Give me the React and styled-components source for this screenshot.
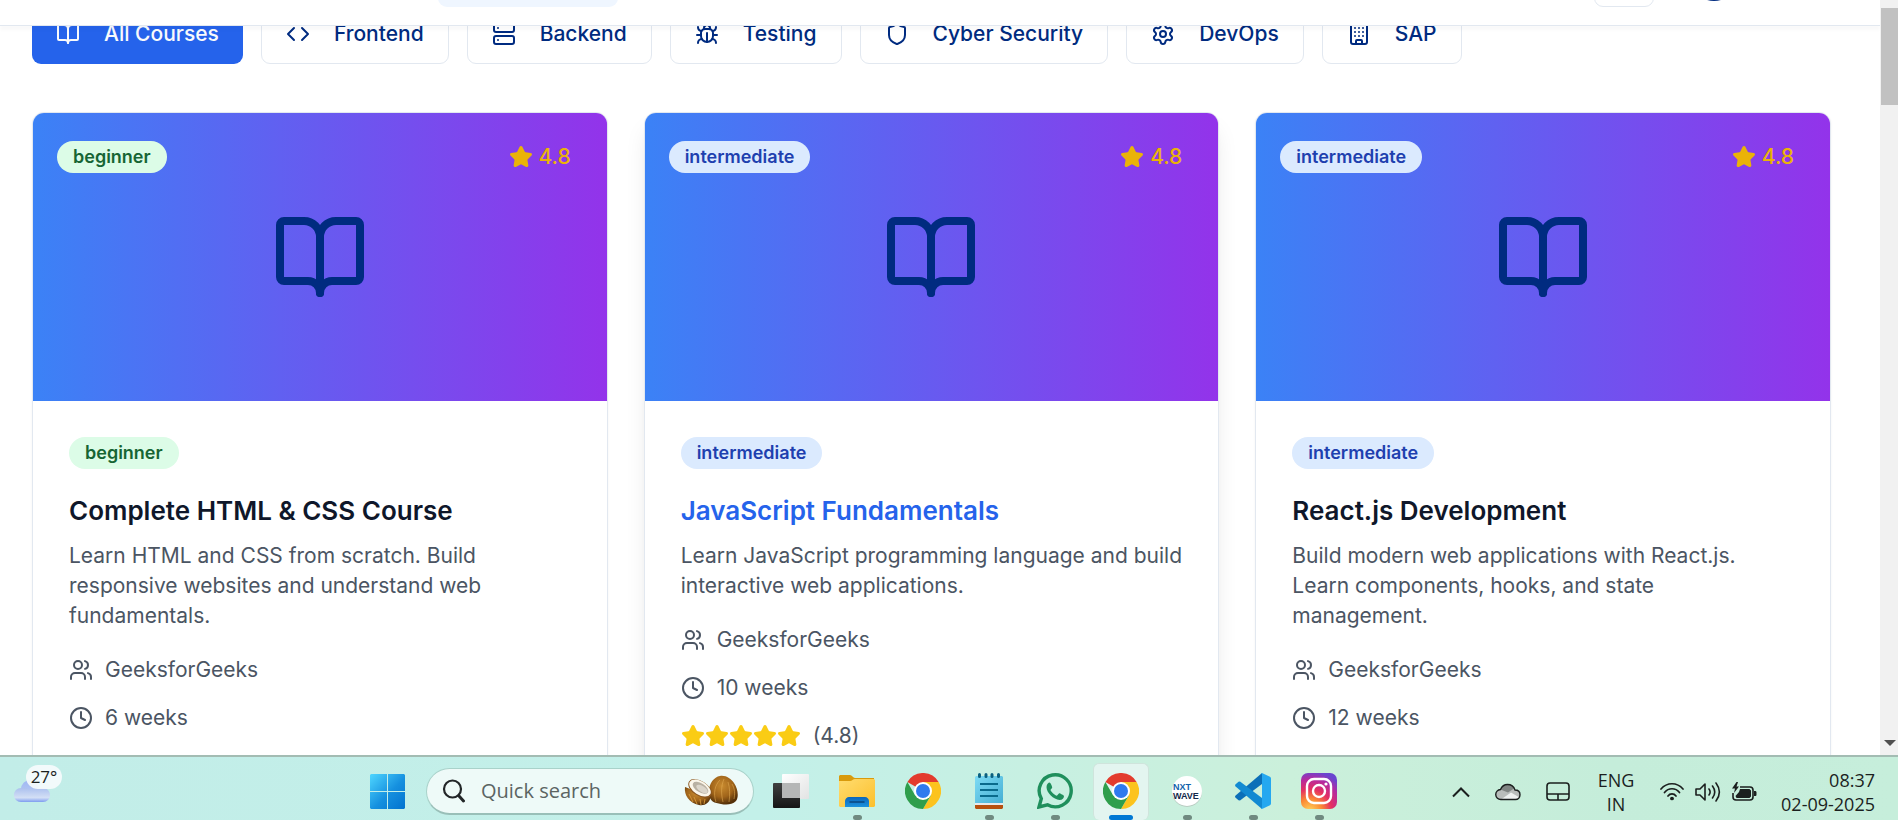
import React from "react";
import styled, { createGlobalStyle, css } from "styled-components";
import { BookOpen, Code, Server, Bug, Shield, Settings, Building, Users, Clock, Star } from "lucide-react";

const GlobalStyle = createGlobalStyle`
  *, *::before, *::after { box-sizing: border-box; }
  body { margin: 0; background: #ffffff; font-family: Inter, "Liberation Sans", sans-serif; }
  h3, p, ul { margin: 0; padding: 0; }
  ul { list-style: none; }
  button { font: inherit; cursor: pointer; }
  svg { display: block; flex: none; }
`;

const Screen = styled.div`
  height: 100vh;
  display: flex;
  flex-direction: column;
  overflow: hidden;
`;

const Viewport = styled.div`
  flex: 1;
  min-height: 0;
  display: flex;
  overflow: hidden;
`;

const Page = styled.div`
  flex: 1;
  min-width: 0;
  overflow: hidden;
  background: #ffffff;
`;

const Header = styled.header`
  position: relative;
  z-index: 2;
  height: 26px;
  padding: 0 142px 18px 438px;
  display: flex;
  justify-content: space-between;
  align-items: flex-end;
  overflow: hidden;
  background: #ffffff;
  border-bottom: 1px solid #e2e8f0;
`;

const HeaderShade = styled.div`
  position: relative;
  z-index: 1;
  height: 1px;
  margin-top: -1px;
  box-shadow: 0 2px 4px rgba(15, 23, 42, 0.14);
`;

const NavPill = styled.a`
  flex: none;
  width: 180px;
  height: 54px;
  border-radius: 9px;
  background: #eff6ff;
`;

const HeaderActions = styled.div`
  display: flex;
  align-items: center;
  gap: 36px;
`;

const IconButton = styled.button`
  width: 60px;
  height: 60px;
  border: 1px solid #e2e8f0;
  border-radius: 9px;
  background: #ffffff;
`;

const Avatar = styled.button`
  width: 48px;
  height: 48px;
  border: 0;
  border-radius: 50%;
  background: #002b80;
`;

const Main = styled.main`
  margin-top: -22px;
  padding: 0 49px 0 32px;
`;

const Filters = styled.nav`
  display: flex;
  gap: 18px;
  margin-bottom: 48px;
`;

const FilterButton = styled.button`
  display: flex;
  align-items: center;
  gap: 24px;
  height: 60px;
  padding: 0 24px;
  border: ${(p) => (p.$active ? "0" : "1px solid #e2e8f0")};
  border-radius: 9px;
  background: ${(p) => (p.$active ? "#2563eb" : "#ffffff")};
  color: ${(p) => (p.$active ? "#f8fafc" : "#002b80")};
  font-size: 21px;
  line-height: 30px;
  font-weight: 500;
  white-space: nowrap;
`;

const Courses = styled.section`
  display: grid;
  grid-template-columns: repeat(3, minmax(0, 1fr));
  gap: 36px;
`;

const Card = styled.article`
  min-height: 760px;
  border: 1px solid #e2e8f0;
  border-radius: 12px;
  background: #ffffff;
  overflow: hidden;
  box-shadow: ${(p) =>
    p.$raised
      ? "0 15px 23px -4px rgba(0, 0, 0, 0.1), 0 6px 9px -6px rgba(0, 0, 0, 0.1)"
      : "0 1px 3px rgba(0, 0, 0, 0.05)"};
`;

const Cover = styled.div`
  position: relative;
  height: 288px;
  display: flex;
  align-items: center;
  justify-content: center;
  background: linear-gradient(to right, #3b82f6, #9333ea);
  color: #002b80;
`;

const CoverBar = styled.div`
  position: absolute;
  inset: 24px 36px auto 24px;
  height: 40px;
  display: flex;
  align-items: center;
  justify-content: space-between;
`;

const Badge = styled.span`
  display: inline-block;
  padding: 3px 15px;
  border: 1px solid transparent;
  border-radius: 16px;
  font-size: 18px;
  line-height: 24px;
  font-weight: 600;
  ${(p) =>
    p.$level === "beginner"
      ? css`
          background: #dcfce7;
          color: #166534;
        `
      : css`
          background: #dbeafe;
          color: #1e40af;
        `}
`;

const Score = styled.span`
  display: flex;
  align-items: center;
  gap: 6px;
  color: #eab308;
  font-size: 21px;
  line-height: 30px;
  font-weight: 500;
`;

const Body = styled.div`
  padding: 36px;
  display: flex;
  flex-direction: column;
  align-items: flex-start;
`;

const Title = styled.h3`
  margin: 21px 0 9px;
  font-size: 26px;
  line-height: 42px;
  font-weight: 600;
  color: ${(p) => (p.$raised ? "#2563eb" : "#0f172a")};
`;

const Description = styled.p`
  margin-bottom: 24px;
  font-size: 21px;
  line-height: 30px;
  color: #4b5563;
`;

const Facts = styled.ul`
  display: flex;
  flex-direction: column;
  gap: 18px;
`;

const Fact = styled.li`
  display: flex;
  align-items: center;
  gap: 12px;
  font-size: 21px;
  line-height: 30px;
  color: #4b5563;
`;

const Stars = styled.span`
  display: flex;
  color: #facc15;
`;

const ScrollTrack = styled.div`
  flex: none;
  width: 18px;
  padding: 8px 0 9px 1px;
  display: flex;
  flex-direction: column;
  justify-content: space-between;
  background: #f1f1f1;
`;

const ScrollThumb = styled.div`
  height: 97px;
  background: #c1c1c1;
`;

const ScrollArrow = styled.div`
  align-self: center;
  border: 6px solid transparent;
  border-top-color: #505050;
  border-bottom-width: 0;
`;

const Taskbar = styled.footer`
  flex: none;
  height: 65px;
  padding-top: 6px;
  display: flex;
  align-items: center;
  border-top: 2px solid #a3bcb3;
  background: linear-gradient(90deg, #c2ede8 0%, #c3f0e9 40%, #cbf0db 68%, #c5edda 85%, #c6eedb 100%);
  font-family: "Open Sans", "Noto Sans", sans-serif;
  color: #1b1f1e;
`;

const Weather = styled.div`
  position: relative;
  flex: none;
  width: 50px;
  height: 38px;
  margin: 0 304px 15px 14px;
  display: flex;
  align-items: flex-end;
`;

const Temperature = styled.span`
  position: absolute;
  top: 0;
  left: 12px;
  width: 36px;
  height: 24px;
  border-radius: 12px;
  background: rgba(246, 251, 252, 0.92);
  font-size: 17px;
  line-height: 24px;
  text-align: center;
`;

const Start = styled.button`
  flex: none;
  width: 39px;
  padding: 0 2px;
  border: 0;
  background: none;
`;

const Search = styled.label`
  flex: none;
  width: 328px;
  height: 47px;
  margin: 0 4px 0 19px;
  padding: 0 15px;
  display: flex;
  align-items: center;
  border: 1px solid #a9d2ca;
  border-bottom: 2px solid #99bfb8;
  border-radius: 24px;
  background: #eefaf8;
`;

const SearchInput = styled.input`
  flex: 1;
  min-width: 0;
  margin: 0 12px 0 15px;
  padding: 0;
  border: 0;
  outline: 0;
  background: none;
  font-family: inherit;
  font-size: 20px;
  line-height: 28px;
  &::placeholder { color: #5b6462; opacity: 1; }
`;

const Apps = styled.div`
  align-self: stretch;
  display: flex;
`;

const AppButton = styled.button`
  width: 66px;
  padding: 0 5px;
  border: 0;
  background: none;
  display: flex;
  flex-direction: column;
  align-items: center;
`;

const AppTile = styled.span`
  flex: 1;
  width: 100%;
  display: flex;
  flex-direction: column;
  align-items: center;
  justify-content: space-between;
  padding-top: ${(p) => (p.$active ? 9 : 10)}px;
  border-radius: 6px;
  border: ${(p) => (p.$active ? "1px solid #cfe4dc" : "0 solid transparent")};
  border-bottom-width: 0;
  background: ${(p) => (p.$active ? "#e3f5f0" : "transparent")};
`;

const RunMark = styled.span`
  width: ${(p) => (p.$state === "active" ? 24 : 9)}px;
  height: 5px;
  border-radius: 3px;
  background: ${(p) => (p.$state === "active" ? "#0078d4" : p.$state === "open" ? "#708a80" : "transparent")};
`;

const Tray = styled.div`
  margin-left: auto;
  padding-right: 23px;
  display: flex;
  align-items: center;
`;

const TrayIcons = styled.div`
  display: flex;
  align-items: center;
  gap: ${(p) => p.$gap}px;
`;

const Language = styled.div`
  width: 44px;
  margin: 0 22px 0 24px;
  font-size: 18px;
  line-height: 24px;
  text-align: center;
`;

const DateTime = styled.div`
  margin-left: 24px;
  font-size: 18px;
  line-height: 24px;
  text-align: right;
  white-space: nowrap;
`;

const filters = [
  { label: "All Courses", icon: BookOpen, active: true },
  { label: "Frontend", icon: Code },
  { label: "Backend", icon: Server },
  { label: "Testing", icon: Bug },
  { label: "Cyber Security", icon: Shield },
  { label: "DevOps", icon: Settings },
  { label: "SAP", icon: Building },
];

const courses = [
  {
    level: "beginner",
    title: "Complete HTML & CSS Course",
    text: "Learn HTML and CSS from scratch. Build responsive websites and understand web fundamentals.",
    weeks: "6 weeks",
  },
  {
    level: "intermediate",
    title: "JavaScript Fundamentals",
    text: "Learn JavaScript programming language and build interactive web applications.",
    weeks: "10 weeks",
    raised: true,
  },
  {
    level: "intermediate",
    title: "React.js Development",
    text: "Build modern web applications with React.js. Learn components, hooks, and state management.",
    weeks: "12 weeks",
  },
];

function Course({ level, title, text, weeks, raised }) {
  return (
    <Card $raised={raised}>
      <Cover>
        <BookOpen size={96} />
        <CoverBar>
          <Badge $level={level}>{level}</Badge>
          <Score>
            <Star size={24} fill="currentColor" />
            4.8
          </Score>
        </CoverBar>
      </Cover>
      <Body>
        <Badge $level={level}>{level}</Badge>
        <Title $raised={raised}>{title}</Title>
        <Description>{text}</Description>
        <Facts>
          <Fact>
            <Users size={24} />
            GeeksforGeeks
          </Fact>
          <Fact>
            <Clock size={24} />
            {weeks}
          </Fact>
          {raised && (
            <Fact>
              <Stars>
                {[0, 1, 2, 3, 4].map((n) => (
                  <Star key={n} size={24} fill="currentColor" />
                ))}
              </Stars>
              (4.8)
            </Fact>
          )}
        </Facts>
      </Body>
    </Card>
  );
}

const CloudIcon = () => (
  <svg width="36" height="24" viewBox="0 0 36 24">
    <defs>
      <linearGradient id="cloudBack" x1="0" y1="0" x2="0" y2="1">
        <stop offset="0" stopColor="#9fb8f3" />
        <stop offset="1" stopColor="#bccdf2" />
      </linearGradient>
      <linearGradient id="cloudFront" x1="0" y1="0" x2="0" y2="1">
        <stop offset="0" stopColor="#aabfee" />
        <stop offset="0.7" stopColor="#d3dff5" />
        <stop offset="1" stopColor="#7d9cf0" />
      </linearGradient>
    </defs>
    <circle cx="16" cy="10" r="9" fill="url(#cloudBack)" />
    <path d="M7 9c3-1 6 0 8 2 2-2 5-3 8-2l6 0c4 0 7 3 7 7s-3 7-7 7H7c-4 0-7-3-7-7s3-7 7-7z" fill="url(#cloudFront)" />
  </svg>
);

const WindowsIcon = () => (
  <svg width="35" height="35" viewBox="0 0 35 35">
    <defs>
      <linearGradient id="win" gradientUnits="userSpaceOnUse" x1="0" y1="0" x2="35" y2="35">
        <stop offset="0" stopColor="#4fd6ff" />
        <stop offset="0.55" stopColor="#1590df" />
        <stop offset="1" stopColor="#0272cf" />
      </linearGradient>
    </defs>
    <path fill="url(#win)" d="M1 0h16v17H0V1zM18 0h16l1 1v16H18zM0 18h17v17H1l-1-1zM18 18h17v16l-1 1H18z" />
  </svg>
);

const SearchGlass = () => (
  <svg width="24" height="24" viewBox="0 0 24 24" fill="none" stroke="#222628" strokeLinecap="round">
    <circle cx="10.500" cy="10" r="8.500" strokeWidth="2.200" />
    <path d="M16.800 16.800 21.500 22" strokeWidth="3" />
  </svg>
);

const CoconutIcon = () => (
  <svg width="54" height="32" viewBox="0 0 54 32">
    <defs>
      <radialGradient id="nut" cx="0.45" cy="0.35" r="0.65">
        <stop offset="0" stopColor="#c98b2f" />
        <stop offset="0.6" stopColor="#a0641a" />
        <stop offset="1" stopColor="#543009" />
      </radialGradient>
    </defs>
    <path d="M36 1c6-1 11 3 14 7 4 6 5 14 2 18-4 4-10 4-15 3-6-1-12-2-12-12C25 8 30 2 36 1z" fill="url(#nut)" />
    <path d="M36 5c-5 5-7 13-4 22M40 4c-3 7-3 15-1 23M44 7c2 6 2 13 1 20M48 9c3 5 3 10 2 15" fill="none" stroke="#e3ac55" strokeWidth="0.800" opacity="0.7" />
    <path d="M1 12c-1 8 4 16 14 18 6 1 10-2 12-8z" fill="url(#nut)" />
    <path d="M5 19l4 8M10 22l3 7M16 24l1 6M21 24l-1 5" stroke="#d79a3c" strokeWidth="0.900" />
    <ellipse cx="16" cy="13.500" rx="13" ry="7.500" transform="rotate(32 16 13.500)" fill="#8a5620" />
    <ellipse cx="16" cy="13" rx="12" ry="6.800" transform="rotate(32 16 13)" fill="#fbf6ea" />
    <ellipse cx="16.500" cy="12.800" rx="8.800" ry="4.500" transform="rotate(32 16.500 12.800)" fill="#b9b1a3" />
    <ellipse cx="18" cy="14" rx="6.500" ry="3" transform="rotate(32 18 14)" fill="#dcd6cb" />
  </svg>
);

const TaskViewIcon = () => (
  <svg width="36" height="36" viewBox="0 0 36 36">
    <defs>
      <linearGradient id="tvDark" x1="0" y1="0" x2="0" y2="1">
        <stop offset="0" stopColor="#3f4040" />
        <stop offset="1" stopColor="#151515" />
      </linearGradient>
      <linearGradient id="tvLight" x1="0" y1="0" x2="1" y2="1">
        <stop offset="0" stopColor="#ffffff" />
        <stop offset="1" stopColor="#e2e3e3" />
      </linearGradient>
    </defs>
    <rect x="9" y="1" width="27" height="25" rx="1" fill="url(#tvLight)" />
    <rect x="0" y="10" width="27" height="25" rx="1" fill="url(#tvDark)" />
    <path d="M9 10h18v15H9z" fill="#b5b6b6" />
  </svg>
);

const FolderIcon = () => (
  <svg width="36" height="36" viewBox="0 0 36 36">
    <defs>
      <linearGradient id="fold" x1="0" y1="0" x2="1" y2="1">
        <stop offset="0" stopColor="#ffdc70" />
        <stop offset="1" stopColor="#fcc02c" />
      </linearGradient>
      <linearGradient id="foldBlue" x1="0" y1="0" x2="0" y2="1">
        <stop offset="0" stopColor="#0b66ba" />
        <stop offset="1" stopColor="#1c93dd" />
      </linearGradient>
    </defs>
    <path d="M1 2h10c2 0 3 3 5 3h19v6H0V3z" fill="#d99a0c" />
    <path d="M0 8h11c2 0 3-2 5-2h19l1 1v26l-1 1H1l-1-1z" fill="url(#fold)" />
    <path d="M6 34V28c0-2 2-4 4-4h16c2 0 4 2 4 4v6z" fill="url(#foldBlue)" />
    <path d="M11 29h14" stroke="#08477f" strokeWidth="1.500" strokeLinecap="round" />
  </svg>
);

const ChromeIcon = () => (
  <svg width="36" height="36" viewBox="0 0 36 36">
    <path d="M18 18 2.400 9A18 18 0 0 1 33.600 9z" fill="#e33b2e" />
    <path d="M18 9h15.600A18 18 0 0 1 18 36l7.800-13.500z" fill="#fcc31e" />
    <path d="M10.200 22.500 2.400 9A18 18 0 0 0 18 36l7.800-13.500z" fill="#2f9e4c" />
    <circle cx="18" cy="18" r="9" fill="#ffffff" />
    <circle cx="18" cy="18" r="7" fill="#2f7aee" />
  </svg>
);

const NotepadIcon = () => (
  <svg width="36" height="36" viewBox="0 0 36 36">
    <defs>
      <linearGradient id="note" x1="0" y1="0" x2="1" y2="1">
        <stop offset="0" stopColor="#7fdcf5" />
        <stop offset="1" stopColor="#45aed3" />
      </linearGradient>
    </defs>
    <path d="M4 32h28v3l-1 1H5l-1-1z" fill="#b6500f" />
    <path d="M4 29h28v3H4z" fill="#e9e9e9" />
    <path d="M5 3h26l1 1v26H4V4z" fill="url(#note)" />
    <path d="M8.500 1.500v2M15 1.500v2M21 1.500v2M27.500 1.500v2" stroke="#0b6080" strokeWidth="3" strokeLinecap="round" />
    <path d="M9 11h18M9 17h18M9 23h18" stroke="#0a6a8c" strokeWidth="2" />
  </svg>
);

const WhatsAppIcon = () => (
  <svg width="36" height="36" viewBox="0 0 36 36">
    <path d="M2 34l2.300-8.300A16 16 0 1 1 10.500 31.800z" fill="none" stroke="#1f8f5c" strokeWidth="3.400" strokeLinejoin="miter" />
    <path d="M12.500 9.500c-1 0-3 1.500-3 4.500 0 6 7 12.500 13 13 3 0 4.500-2 4.500-4 0-.7-4-2.800-4.700-2.800-.8 0-1.800 2.500-2.500 2.500-1.500 0-6-4-6.300-5.700 0-.7 1.700-1.700 1.700-2.600 0-.8-1.500-4.900-2.700-4.900z" fill="#1f8f5c" />
  </svg>
);

const NxtWaveIcon = () => (
  <svg width="36" height="36" viewBox="0 0 36 36" fontFamily="Liberation Sans, sans-serif" fontWeight="700" fontSize="9">
    <circle cx="18" cy="19" r="15" fill="#b9ccc2" />
    <circle cx="18" cy="18" r="15" fill="#ffffff" />
    <text x="4" y="17" fill="#1262ab">NXT</text>
    <text x="4" y="26" fill="#12284a">WAVE</text>
  </svg>
);

const VSCodeIcon = () => (
  <svg width="36" height="36" viewBox="0 0 36 36">
    <path d="M27 0v11L5 27.500 3.500 27.200.6 24.700c-.8-.7-.7-1.500 0-2.200z" fill="#0b6fb8" />
    <path d="M27 36V25L5 8.500l-1.500.3L.6 11.300c-.8.7-.7 1.500 0 2.200z" fill="#128ad2" />
    <path d="M26 0c.5-.2 1 0 1.500.2l7.500 3.500c.6.400 1 1 1 1.700v25.200c0 .7-.4 1.300-1 1.700l-7.500 3.500c-.5.200-1 .4-1.500 0 .7-.4 1-1 1-2V2c0-1-.3-1.600-1-2z" fill="#25a8f0" />
  </svg>
);

const InstagramIcon = () => (
  <svg width="36" height="36" viewBox="0 0 36 36" fill="none" stroke="#ffffff">
    <defs>
      <radialGradient id="insta" cx="0.25" cy="1.05" r="1.1">
        <stop offset="0" stopColor="#ffd35a" />
        <stop offset="0.3" stopColor="#fb8a34" />
        <stop offset="0.55" stopColor="#e42f62" />
        <stop offset="0.8" stopColor="#b52aa0" />
        <stop offset="1" stopColor="#6a45cf" />
      </radialGradient>
    </defs>
    <rect width="36" height="36" rx="7" fill="url(#insta)" stroke="none" />
    <rect x="6" y="6" width="24" height="24" rx="7" strokeWidth="2.400" />
    <circle cx="18" cy="18" r="6" strokeWidth="2.400" />
    <circle cx="25" cy="11" r="1.600" fill="#ffffff" stroke="none" />
  </svg>
);

const ChevronIcon = () => (
  <svg width="18" height="12" viewBox="0 0 18 12" fill="none" stroke="#1b1f1e" strokeWidth="2">
    <path d="M1 10.500 9 2.500l8 8" />
  </svg>
);

const OneDriveIcon = () => (
  <svg width="26" height="18" viewBox="0 0 26 18">
    <path d="M6 16.500a5 5 0 0 1-.5-10C7 3 9.500 1.500 12.500 1.500c4 0 6.500 2.500 7.500 5.500 3 0 5 2 5 4.800s-2 4.700-4.500 4.700z" fill="#b9bdbb" />
    <path d="M6 16.500 16 9.500l8.500 5c-1 1.500-2.500 2-4 2z" fill="#eef1f0" />
    <path d="M5.500 6.500C7 3 9.500 1.500 12.500 1.500c3 0 5.500 2 6.500 4l-6 4z" fill="#7f8482" />
    <path d="M6 16.500a5 5 0 0 1-.5-10C7 3 9.500 1.500 12.500 1.500c4 0 6.500 2.500 7.500 5.500 3 0 5 2 5 4.800s-2 4.700-4.500 4.700z" fill="none" stroke="#1b1f1e" strokeWidth="1.400" />
  </svg>
);

const TouchpadIcon = () => (
  <svg width="24" height="20" viewBox="0 0 24 20" fill="none" stroke="#1b1f1e" strokeWidth="1.600">
    <rect x="1" y="1" width="22" height="17" rx="3" />
    <path d="M1 12h22M12 12v6" />
  </svg>
);

const WifiIcon = () => (
  <svg width="24" height="20" viewBox="0 0 24 20" fill="none" stroke="#1b1f1e" strokeWidth="1.700" strokeLinecap="round">
    <path d="M1 7c6-7 16-7 22 0M4.500 10.500c4-5 11-5 15 0M8 14c2-2.800 6-2.800 8 0" />
    <circle cx="12" cy="16.500" r="1.500" fill="#1b1f1e" stroke="none" />
    <circle cx="12" cy="16.500" r="1" />
  </svg>
);

const SpeakerIcon = () => (
  <svg width="26" height="22" viewBox="0 0 26 22" fill="none" stroke="#1b1f1e" strokeWidth="1.600" strokeLinecap="round" strokeLinejoin="round">
    <path d="M1 8h4l5-5v16l-5-5H1zM14 8c1.500 2 1.500 4 0 6M17.500 5c3 4 3 8 0 12M21 2c4.500 6 4.500 12 0 18" />
  </svg>
);

const BatteryIcon = () => (
  <svg width="25" height="20" viewBox="0 0 25 20">
    <path d="M8 5h10c1.700 0 3 1.300 3 3v7c0 1.700-1.300 3-3 3H4c-1.700 0-3-1.300-3-3v-4" fill="none" stroke="#1b1f1e" strokeWidth="1.600" />
    <path d="M22 9h1c1 0 1.500.5 1.500 1.500v2c0 1-.5 1.500-1.500 1.500h-1zM8 7h9.500l1.500 1.500v6L17.500 16h-13L3.500 14 7 10z" fill="#1b1f1e" />
    <path d="M4.500 0 0 6.500h3L2 11l5-6.500H4.500L6 0z" fill="#1b1f1e" />
  </svg>
);

const apps = [
  { name: "Task view", Icon: TaskViewIcon, state: "idle" },
  { name: "File Explorer", Icon: FolderIcon, state: "open" },
  { name: "Chrome profile", Icon: ChromeIcon, state: "idle" },
  { name: "Notepad", Icon: NotepadIcon, state: "open" },
  { name: "WhatsApp", Icon: WhatsAppIcon, state: "open" },
  { name: "Chrome", Icon: ChromeIcon, state: "active" },
  { name: "NxtWave", Icon: NxtWaveIcon, state: "open" },
  { name: "Visual Studio Code", Icon: VSCodeIcon, state: "open" },
  { name: "Instagram", Icon: InstagramIcon, state: "open" },
];

export default function App() {
  return (
    <Screen>
      <GlobalStyle />
      <Viewport>
        <Page>
          <Header>
            <NavPill href="#courses" aria-label="Courses" />
            <HeaderActions>
              <IconButton aria-label="Theme" />
              <Avatar aria-label="Account" />
            </HeaderActions>
          </Header>
          <HeaderShade />
          <Main>
            <Filters aria-label="Course categories">
              {filters.map(({ label, icon: Icon, active }) => (
                <FilterButton key={label} $active={active}>
                  <Icon size={24} />
                  {label}
                </FilterButton>
              ))}
            </Filters>
            <Courses id="courses">
              {courses.map((course) => (
                <Course key={course.title} {...course} />
              ))}
            </Courses>
          </Main>
        </Page>
        <ScrollTrack>
          <ScrollThumb />
          <ScrollArrow />
        </ScrollTrack>
      </Viewport>
      <Taskbar>
        <Weather>
          <CloudIcon />
          <Temperature>27°</Temperature>
        </Weather>
        <Start aria-label="Start">
          <WindowsIcon />
        </Start>
        <Search>
          <SearchGlass />
          <SearchInput type="text" placeholder="Quick search" aria-label="Quick search" />
          <CoconutIcon />
        </Search>
        <Apps>
          {apps.map(({ name, Icon, state }) => (
            <AppButton key={name} aria-label={name}>
              <AppTile $active={state === "active"}>
                <Icon />
                <RunMark $state={state} />
              </AppTile>
            </AppButton>
          ))}
        </Apps>
        <Tray>
          <TrayIcons $gap={25}>
            <ChevronIcon />
            <OneDriveIcon />
            <TouchpadIcon />
          </TrayIcons>
          <Language>
            ENG
            <br />
            IN
          </Language>
          <TrayIcons $gap={11}>
            <WifiIcon />
            <SpeakerIcon />
            <BatteryIcon />
          </TrayIcons>
          <DateTime>
            08:37
            <br />
            02-09-2025
          </DateTime>
        </Tray>
      </Taskbar>
    </Screen>
  );
}
